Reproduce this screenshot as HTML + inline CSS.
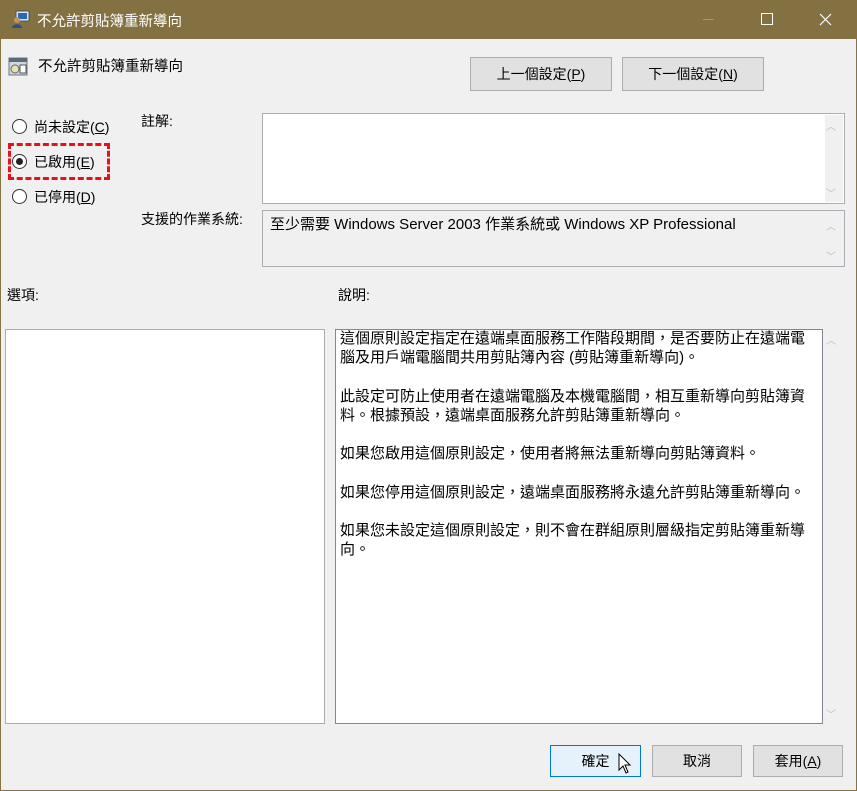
<!DOCTYPE html>
<html><head><meta charset="utf-8"><style>
*{margin:0;padding:0;box-sizing:border-box}
body{width:857px;height:791px;overflow:hidden;background:#f0f0f0;font-family:"Liberation Sans","Noto Sans CJK TC",sans-serif;font-size:14px;color:#000;position:relative}
.a{position:absolute;white-space:nowrap}
.win{position:absolute;left:0;top:0;width:857px;height:791px;border:1px solid #857340;border-top:none}
.tb{position:absolute;left:0;top:0;width:857px;height:39px;background:#837142;color:#fff}
.btn{position:absolute;background:#e1e1e1;border:1px solid #adadad;text-align:center;font-size:14px}
.box{position:absolute;background:#fff;border:1px solid #abadb3}
.rad{position:absolute;width:15px;height:15px;border:1px solid #333;border-radius:50%;background:#fff}
.sa{position:absolute;color:#bbb;font-size:10px}
u{text-decoration:underline}
</style></head><body>
<div class="win"></div>
<div class="tb">
<svg class="a" style="left:11px;top:9px" width="20" height="20" viewBox="0 0 20 20"><rect x="5" y="2" width="13" height="10" fill="#dfe8f0" stroke="#456" /><rect x="7" y="4" width="9" height="6" fill="#2a66b5"/><circle cx="6" cy="11" r="3" fill="#c8905a"/><path d="M1 19c0-5 10-5 10 0z" fill="#2a4f8a"/></svg>
<div class="a" style="left:37px;top:10px;font-size:14.5px">不允許剪貼簿重新導向</div>
<div class="a" style="left:703px;top:19px;width:11px;height:1px;background:#a89a70"></div>
<div class="a" style="left:761px;top:13px;width:12px;height:12px;border:1px solid #fff"></div>
<svg class="a" style="left:819px;top:13px" width="13" height="13"><path d="M1 1L12 12M12 1L1 12" stroke="#fff" stroke-width="1.2"/></svg>
</div>
<svg class="a" style="left:8px;top:56px" width="20" height="20" viewBox="0 0 20 20"><rect x="1" y="2" width="18" height="17" fill="#cfd6dc" stroke="#6b7680"/><rect x="1" y="2" width="18" height="4" fill="#5a6b7a"/><circle cx="7" cy="13" r="4" fill="#e8e0b0" stroke="#666"/><rect x="12" y="9" width="6" height="8" fill="#fff" stroke="#555"/></svg>
<div class="a" style="left:38px;top:55px;font-size:14.5px">不允許剪貼簿重新導向</div>
<div class="btn" style="left:470px;top:57px;width:142px;height:34px;line-height:32px">上一個設定(<u>P</u>)</div>
<div class="btn" style="left:622px;top:57px;width:142px;height:34px;line-height:32px">下一個設定(<u>N</u>)</div>
<div class="rad" style="left:12px;top:119px"></div>
<div class="a" style="left:34px;top:117px">尚未設定(<u>C</u>)</div>
<div class="rad" style="left:12px;top:154px"><div style="position:absolute;left:3px;top:3px;width:7px;height:7px;border-radius:50%;background:#222"></div></div>
<div class="a" style="left:34px;top:152px">已啟用(<u>E</u>)</div>
<div class="a" style="left:8px;top:143px;width:102px;height:37px;border:3px dashed #e8101a"></div>
<div class="rad" style="left:12px;top:189px"></div>
<div class="a" style="left:34px;top:187px">已停用(<u>D</u>)</div>
<div class="a" style="left:141px;top:111px">註解:</div>
<div class="box" style="left:262px;top:113px;width:583px;height:91px"><div style="position:absolute;right:1px;top:1px;width:18px;height:87px;background:#f0f0f0"></div></div>
<div class="sa" style="left:826px;top:118px">︿</div><div class="sa" style="left:826px;top:185px">﹀</div>
<div class="a" style="left:141px;top:209px">支援的作業系統:</div>
<div class="box" style="left:262px;top:210px;width:583px;height:57px;background:#f0f0f0"></div>
<div class="a" style="left:270px;top:213px;font-size:15px">至少需要 Windows Server 2003 作業系統或 Windows XP Professional</div>
<div class="sa" style="left:826px;top:218px">︿</div><div class="sa" style="left:826px;top:248px">﹀</div>
<div class="a" style="left:7px;top:285px">選項:</div>
<div class="a" style="left:338px;top:285px">說明:</div>
<div class="box" style="left:5px;top:329px;width:320px;height:395px"></div>
<div class="box" style="left:335px;top:329px;width:488px;height:395px;border-color:#828790"></div>
<div class="a" style="left:826px;top:332px;color:#bbb;font-size:10px">︿</div>
<div class="a" style="left:826px;top:706px;color:#bbb;font-size:10px">﹀</div>
<div class="a" style="left:340px;top:329px;line-height:19.2px;font-size:15px">這個原則設定指定在遠端桌面服務工作階段期間，是否要防止在遠端電<br>腦及用戶端電腦間共用剪貼簿內容 (剪貼簿重新導向)。<br><br>此設定可防止使用者在遠端電腦及本機電腦間，相互重新導向剪貼簿資<br>料。根據預設，遠端桌面服務允許剪貼簿重新導向。<br><br>如果您啟用這個原則設定，使用者將無法重新導向剪貼簿資料。<br><br>如果您停用這個原則設定，遠端桌面服務將永遠允許剪貼簿重新導向。<br><br>如果您未設定這個原則設定，則不會在群組原則層級指定剪貼簿重新導<br>向。</div>
<div class="btn" style="left:550px;top:745px;width:91px;height:32px;line-height:30px;background:#e5f1fb;border-color:#0078d7">確定</div>
<svg class="a" style="left:618px;top:753px" width="14" height="22" viewBox="0 0 14 22"><path d="M1 1V17L5 13L8 20L10 19L7 12H12Z" fill="#fff" stroke="#000"/></svg>
<div class="btn" style="left:652px;top:745px;width:90px;height:32px;line-height:30px">取消</div>
<div class="btn" style="left:753px;top:745px;width:90px;height:32px;line-height:30px">套用(<u>A</u>)</div>
</body></html>
